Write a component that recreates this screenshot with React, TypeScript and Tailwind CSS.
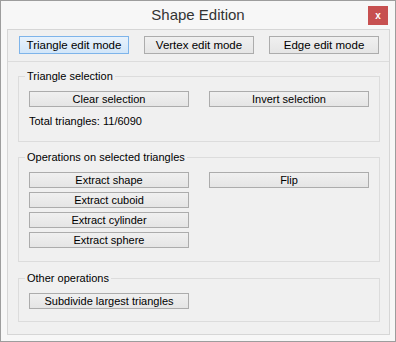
import React from 'react';

const font = { fontFamily: '"Liberation Sans", Arial, sans-serif' };

const Btn: React.FC<{ label: string }> = ({ label }) => (
  <button className="block w-full h-[16px] border border-[#acacac] bg-gradient-to-b from-[#f0f0f0] to-[#e5e5e5] text-[11px] leading-[14px] text-black">
    {label}
  </button>
);

const Group: React.FC<{ title: string; className?: string; children: React.ReactNode }> = ({
  title,
  className = '',
  children,
}) => (
  <fieldset className={`ml-[10px] mr-[9px] border border-[#dcdcdc] px-[10px] ${className}`}>
    <legend className="ml-[-4px] px-[2px] text-[11px] leading-[14px] text-black">{title}</legend>
    {children}
  </fieldset>
);

export default function App() {
  return (
    <div style={font} className="w-[396px] h-[342px] border border-[#9d9d9d] bg-[#f7f7f7] flex flex-col">
      <div className="relative h-[28px] flex items-center justify-center">
        <span className="text-[15px] text-[#333] mt-[1px]">Shape Edition</span>
        <div className="absolute right-[7px] top-[5px] w-[20px] h-[19px] bg-[#c75050] flex items-center justify-center">
          <span className="text-white text-[10px] font-bold leading-none">x</span>
        </div>
      </div>

      <div className="ml-[6px] mr-[5px] h-[306px] border border-[#d6d6d6] bg-[#f0f0f0] flex flex-col">
        <div className="pt-[6px] pl-[11px] flex gap-[15px]">
          <button className="w-[110px] h-[18px] border border-[#7eb4ea] bg-gradient-to-b from-[#e8f2fc] to-[#d2e6f9] text-[11.5px] text-black">
            Triangle edit mode
          </button>
          <button className="w-[110px] h-[18px] border border-[#acacac] bg-gradient-to-b from-[#f0f0f0] to-[#e5e5e5] text-[11.5px] text-black">
            Vertex edit mode
          </button>
          <button className="w-[110px] h-[18px] border border-[#acacac] bg-gradient-to-b from-[#f0f0f0] to-[#e5e5e5] text-[11.5px] text-black">
            Edge edit mode
          </button>
        </div>
        <div className="mt-[7px] h-px bg-[#dcdcdc]" />

        <Group title="Triangle selection" className="mt-[7px] h-[73px] pt-[8px]">
          <div className="grid grid-cols-2 gap-[20px]">
            <Btn label="Clear selection" />
            <Btn label="Invert selection" />
          </div>
          <div className="mt-[7px] text-[11px] leading-[14px] text-black">Total triangles: 11/6090</div>
        </Group>

        <Group title="Operations on selected triangles" className="mt-[8px] h-[112px] pt-[8px]">
          <div className="grid grid-cols-2 gap-x-[20px] items-start">
            <div className="flex flex-col gap-[4px]">
              <Btn label="Extract shape" />
              <Btn label="Extract cuboid" />
              <Btn label="Extract cylinder" />
              <Btn label="Extract sphere" />
            </div>
            <Btn label="Flip" />
          </div>
        </Group>

        <Group title="Other operations" className="mt-[9px] h-[51px] pt-[8px]">
          <div className="grid grid-cols-2 gap-[20px]">
            <Btn label="Subdivide largest triangles" />
          </div>
        </Group>
      </div>
    </div>
  );
}
